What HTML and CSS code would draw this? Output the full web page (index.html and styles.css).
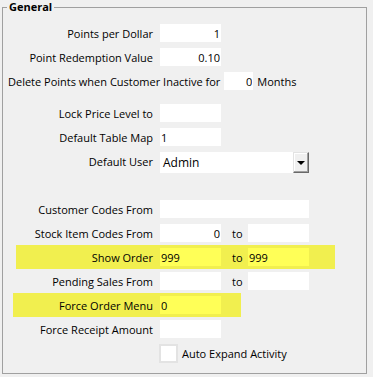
FILE: index.html
```html
<!DOCTYPE html>
<html lang="en">
<head>
    <meta charset="UTF-8">
    <title>General</title>
    <link rel="stylesheet" href="styles.css">
</head>
<body>
    <div class="group">
        <span class="legend">General</span>

        <div class="row">
            <label class="lbl">Points per Dollar</label>
            <input class="box num" value="1">
        </div>
        <div class="row">
            <label class="lbl">Point Redemption Value</label>
            <input class="box num" value="0.10">
        </div>
        <div class="row loose">
            <label>Delete Points when Customer Inactive for</label>
            <input class="box short num" value="0">
            <span>Months</span>
        </div>

        <div class="spacer small"></div>

        <div class="row">
            <label class="lbl">Lock Price Level to</label>
            <input class="box" value="">
        </div>
        <div class="row">
            <label class="lbl">Default Table Map</label>
            <input class="box" value="1">
        </div>
        <div class="row">
            <label class="lbl">Default User</label>
            <div class="combo">
                <span class="combo-text">Admin</span>
                <span class="combo-btn"><span class="arrow"></span></span>
            </div>
        </div>

        <div class="spacer"></div>

        <div class="row">
            <label class="lbl">Customer Codes From</label>
            <input class="box wide" value="">
        </div>
        <div class="row">
            <label class="lbl">Stock Item Codes From</label>
            <input class="box num" value="0">
            <span class="to">to</span>
            <input class="box" value="">
        </div>
        <div class="row hl hl-show">
            <label class="lbl">Show Order</label>
            <input class="box" value="999">
            <span class="to">to</span>
            <input class="box" value="999">
        </div>
        <div class="row">
            <label class="lbl">Pending Sales From</label>
            <input class="box" value="">
            <span class="to">to</span>
            <input class="box" value="">
        </div>
        <div class="row hl hl-force">
            <label class="lbl">Force Order Menu</label>
            <input class="box" value="0">
        </div>
        <div class="row">
            <label class="lbl">Force Receipt Amount</label>
            <input class="box" value="">
        </div>
        <div class="row">
            <span class="lbl"></span>
            <span class="check"></span>
            <span class="check-text">Auto Expand Activity</span>
        </div>
    </div>
</body>
</html>
```
FILE: styles.css
```css
body {
    margin: 0;
    background: #f0f0f0;
    font-family: 'Open Sans', 'Noto Sans', sans-serif;
    font-size: 11px;
    color: #000;
}
.group {
    position: relative;
    box-sizing: border-box;
    margin: 7px 0 0 2px;
    width: 365px;
    height: 367px;
    border: 1px solid #a0a0a0;
    padding-top: 13px;
}
.legend {
    position: absolute;
    top: -9px;
    left: 4px;
    padding: 0 2px;
    background: #f0f0f0;
    font-weight: bold;
    font-size: 11px;
}
.row {
    display: flex;
    align-items: center;
    height: 24px;
}
.lbl {
    width: 150px;
    margin-right: 7px;
    text-align: right;
    white-space: nowrap;
}
.box {
    box-sizing: border-box;
    width: 61px;
    height: 18px;
    border: 0;
    padding: 0 1px;
    margin: 0;
    background: #fff;
    font: inherit;
    color: #000;
    outline: none;
}
.box.num { text-align: right; }
.box.wide { width: 149px; }
.box.short { width: 29px; margin: 0 4px; }
.loose { padding-left: 5px; white-space: nowrap; }
.to {
    box-sizing: border-box;
    width: 27px;
    padding-left: 11px;
}
.spacer { height: 24px; }
.spacer.small { height: 8px; }

.hl { background: #f1ef4f; }
.hl .box { background: #ffff57; }
.hl-show { margin-left: 13px; width: 319px; }
.hl-show .lbl { width: 137px; }
.hl-force { margin-left: 10px; width: 228px; }
.hl-force .lbl { width: 140px; }

.combo {
    align-self: flex-start;
    margin-top: 3px;
    display: flex;
    width: 149px;
    height: 21px;
    background: #fff;
}
.combo-text {
    flex: 1;
    padding-left: 3px;
    font-size: 12px;
    line-height: 21px;
}
.combo-btn {
    box-sizing: border-box;
    width: 16px;
    height: 21px;
    background: #f0f0f0;
    border: 1px solid;
    border-color: #e3e3e3 #696969 #696969 #e3e3e3;
    box-shadow: inset -1px -1px 0 #a0a0a0, inset 1px 1px 0 #fff;
    display: flex;
    align-items: center;
    justify-content: center;
}
.arrow {
    width: 0;
    height: 0;
    border-left: 4px solid transparent;
    border-right: 4px solid transparent;
    border-top: 4px solid #000;
    margin-top: 1px;
}
.check {
    box-sizing: border-box;
    width: 19px;
    height: 19px;
    margin-left: -1px;
    border: 2px solid #e3e3e3;
    background: #fff;
}
.check-text { margin-left: 4px; }
```
